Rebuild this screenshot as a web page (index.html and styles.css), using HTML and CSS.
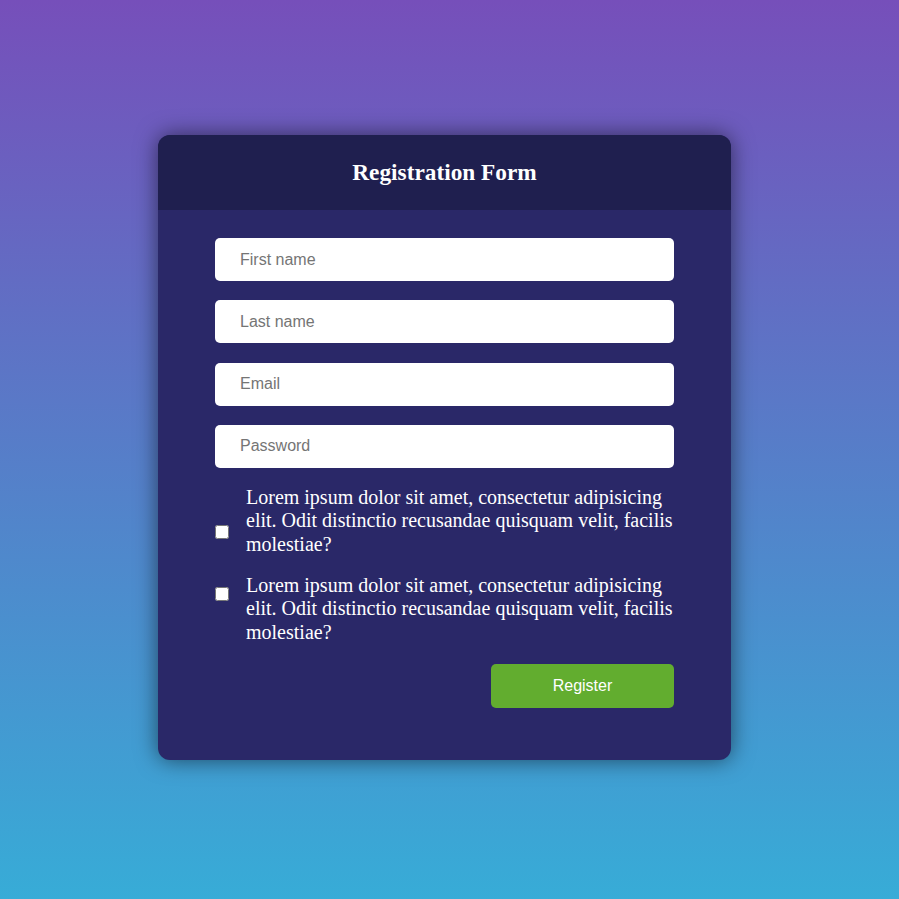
FILE: index.html
```html
<!DOCTYPE html>
<html>
<head>
<meta charset="utf-8">
<link rel="stylesheet" href="styles.css">
</head>
<body>
<div class="page">
  <div class="card">
    <div class="card-header">
      <h2 class="title">Registration Form</h2>
    </div>
    <form class="card-body">
      <input class="field" type="text" placeholder="First name">
      <input class="field" type="text" placeholder="Last name">
      <input class="field" type="email" placeholder="Email">
      <input class="field" type="password" placeholder="Password">
      <label class="check-row check-row-first">
        <input type="checkbox" class="check check-low">
        <span class="check-text">Lorem ipsum dolor sit amet, consectetur adipisicing elit. Odit distinctio recusandae quisquam velit, facilis molestiae?</span>
      </label>
      <label class="check-row">
        <input type="checkbox" class="check check-high">
        <span class="check-text">Lorem ipsum dolor sit amet, consectetur adipisicing elit. Odit distinctio recusandae quisquam velit, facilis molestiae?</span>
      </label>
      <div class="actions">
        <button type="button" class="btn">Register</button>
      </div>
    </form>
  </div>
</div>
</body>
</html>
```
FILE: styles.css
```css
* { box-sizing: border-box; }
html, body { margin: 0; padding: 0; }
body {
  height: 899px;
  background: linear-gradient(to bottom, #764fba 0%, #37acd7 100%);
  font-family: "Liberation Serif", "Times New Roman", serif;
}
.page {
  height: 899px;
  display: flex;
  justify-content: center;
  padding-top: 135px;
  padding-right: 10px;
}
.card {
  width: 573px;
  height: 625px;
  background: #2a2868;
  border-radius: 12px;
  overflow: hidden;
  box-shadow: 0 0 22px rgba(0, 0, 0, 0.55);
  display: flex;
  flex-direction: column;
}
.card-header {
  height: 75px;
  background: #1f1f4f;
  display: flex;
  align-items: center;
  justify-content: center;
}
.title {
  margin: 0;
  color: #fff;
  font-size: 23.3px;
  font-weight: bold;
}
.card-body {
  margin: 0;
  padding: 28px 57px 0 57px;
  display: flex;
  flex-direction: column;
}
.field {
  height: 43px;
  width: 100%;
  border: none;
  border-radius: 5px;
  padding: 0 25px;
  font-family: "Liberation Sans", Arial, sans-serif;
  font-size: 16px;
  color: #333;
  background: #fff;
  margin-bottom: 19.33px;
  outline: none;
}
.field::placeholder { color: #757575; }
.check-row {
  display: flex;
  align-items: flex-start;
  gap: 17px;
  color: #fff;
  margin-bottom: 17.5px;
}
.check-row-first { margin-top: -1.5px; }
.check {
  margin: 0;
  width: 14px;
  height: 14px;
  flex: none;
}
.check-low { margin-top: 39px; }
.check-high { margin-top: 13px; }
.check-text {
  font-size: 20px;
  line-height: 23.5px;
}
.actions {
  display: flex;
  justify-content: flex-end;
  margin-top: 2px;
}
.btn {
  width: 183px;
  height: 44px;
  background: #62ad2f;
  border: none;
  border-radius: 5px;
  color: #fff;
  font-family: "Liberation Sans", Arial, sans-serif;
  font-size: 16px;
}
```
